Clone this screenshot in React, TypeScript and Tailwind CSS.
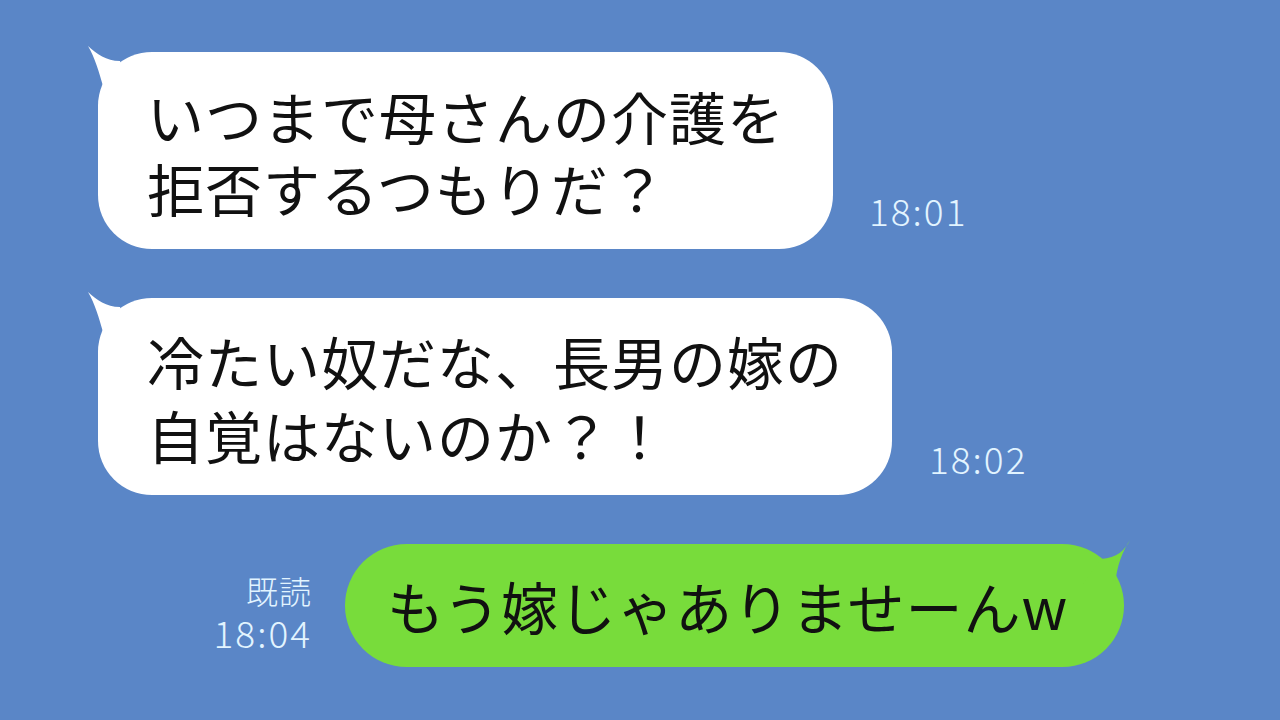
import React from "react";

const jp = "font-['Noto_Sans_CJK_JP','Noto_Sans',sans-serif]";

const LeftTail = ({ color }: { color: string }) => (
  <svg className="absolute left-0 top-0 overflow-visible" width="1" height="1">
    <path
      d="M-10 -6 C-1 2, 8 9, 22 9 L32 40 L5 34 C1 20, -3 6, -10 -6 Z"
      fill={color}
    />
  </svg>
);

const RightTail = ({ color }: { color: string }) => (
  <svg className="absolute right-0 top-0 overflow-visible" width="1" height="1">
    <path
      d="M7 -4 C2 6, -6 14, -22 15 L-40 40 L-8 40 C-6 22, -1 8, 7 -4 Z"
      fill={color}
    />
  </svg>
);

const Time = ({ children }: { children: React.ReactNode }) => (
  <span className={`${jp} block text-[37px] leading-none font-light tracking-[2px] text-[#e2f4ff]`}>
    {children}
  </span>
);

const Line = ({ children }: { children: React.ReactNode }) => (
  <span className="block h-[72px] leading-[72px]">{children}</span>
);

export default function App() {
  return (
    <div className={`w-[1280px] h-[720px] bg-[#5a86c7] overflow-hidden ${jp}`}>
      <div className="flex flex-col pt-[52px] pl-[98px]">
        {/* message 1 */}
        <div className="flex items-end">
          <div className="relative w-[735px] h-[197px] rounded-[54px] bg-white flex items-center pl-[49px]">
            <LeftTail color="#ffffff" />
            <div className="text-[57px] text-[#111] tracking-[1px]">
              <Line>いつまで母さんの介護を</Line>
              <Line>拒否するつもりだ？</Line>
            </div>
          </div>
          <div className="ml-[36px] mb-[20px]">
            <Time>18:01</Time>
          </div>
        </div>

        {/* message 2 */}
        <div className="flex items-end mt-[49px]">
          <div className="relative w-[794px] h-[197px] rounded-[54px] bg-white flex items-center pl-[49px]">
            <LeftTail color="#ffffff" />
            <div className="text-[57px] text-[#111] tracking-[1px]">
              <Line>冷たい奴だな、長男の嫁の</Line>
              <span className="block h-[74px] leading-[76px]">自覚はないのか？！</span>
            </div>
          </div>
          <div className="ml-[37px] mb-[18px]">
            <Time>18:02</Time>
          </div>
        </div>

        {/* my reply */}
        <div className="flex items-end justify-end mt-[49px] pr-[156px]">
          <div className="flex flex-col items-end mr-[33px] mb-[16px] text-[#e2f4ff] font-light">
            <span className="block text-[32px] leading-none tracking-[1px] mb-[8px]">既読</span>
            <Time>18:04</Time>
          </div>
          <div className="relative w-[779px] h-[123px] rounded-full bg-[#78dc3b] flex items-center pl-[42px]">
            <RightTail color="#78dc3b" />
            <p className="text-[57px] leading-none text-[#111] tracking-[1px]">
              もう嫁じゃありませーんw
            </p>
          </div>
        </div>
      </div>
    </div>
  );
}
